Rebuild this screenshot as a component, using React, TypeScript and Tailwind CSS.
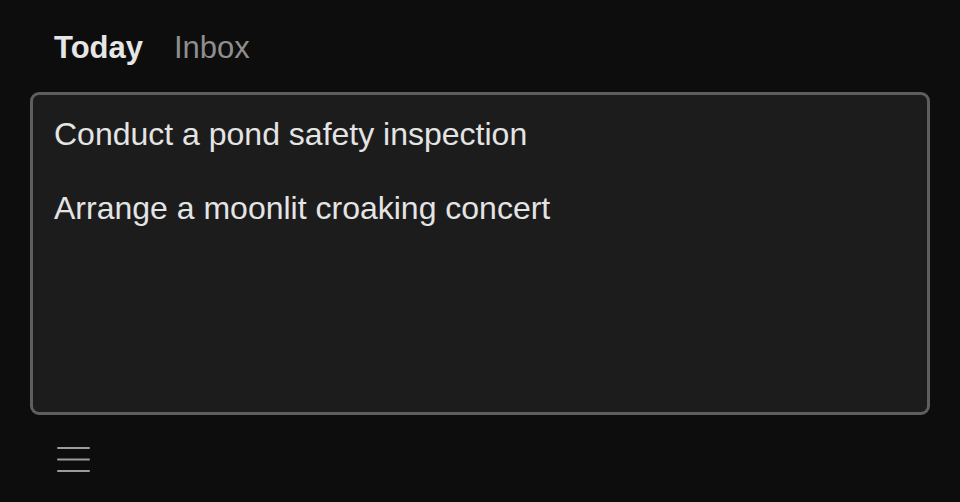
import React from "react";

export default function App() {
  const tasks = ["Conduct a pond safety inspection", "Arrange a moonlit croaking concert"];
  return (
    <div
      className="w-[960px] h-[502px] bg-[#0d0d0d] px-[30px] pt-[30px] overflow-hidden"
      style={{ fontFamily: '"Liberation Sans", Arial, sans-serif' }}
    >
      <div className="flex items-center gap-[31px] pl-[24px] h-[36px] text-[31px] leading-[36px]">
        <span className="font-bold text-[#e6e6e6]">Today</span>
        <span className="text-[#8e8e8e]">Inbox</span>
      </div>
      <div className="mt-[26px] h-[323px] rounded-[9px] border-[3px] border-[#5e5e5e] bg-[#1c1c1c] pl-[21px] pt-[19px]">
        <div className="flex flex-col gap-[34px]">
          {tasks.map((t) => (
            <div key={t} className="text-[32px] leading-[40px] text-[#e4e4e4]">
              {t}
            </div>
          ))}
        </div>
      </div>
      <div className="pl-[27px] pt-[31px]">
        <svg width="33" height="26" viewBox="0 0 33 26" className="block">
          <rect x="0" y="1" width="33" height="2" rx="1" fill="#9c9c9c" />
          <rect x="0" y="12.5" width="33" height="2" rx="1" fill="#9c9c9c" />
          <rect x="0" y="24" width="33" height="2" rx="1" fill="#9c9c9c" />
        </svg>
      </div>
    </div>
  );
}
